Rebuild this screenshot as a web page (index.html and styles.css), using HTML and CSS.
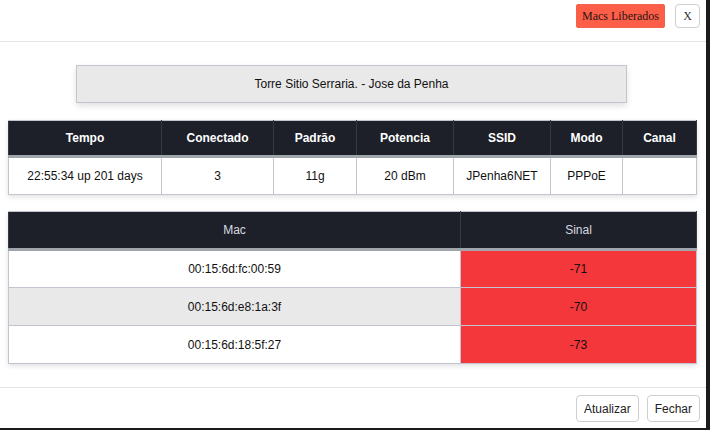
FILE: index.html
```html
<!DOCTYPE html>
<html lang="pt">
<head>
<meta charset="utf-8">
<title>Torre</title>
<link rel="stylesheet" href="styles.css">
</head>
<body>
<div class="modal">
  <div class="modal-header">
    <button class="btn-macs">Macs Liberados</button>
    <button class="btn-x">X</button>
  </div>
  <div class="modal-body">
    <div class="title-box">Torre Sitio Serraria. - Jose da Penha</div>
    <table class="info-table">
      <thead>
        <tr>
          <th class="c1">Tempo</th>
          <th class="c2">Conectado</th>
          <th class="c3">Padrão</th>
          <th class="c4">Potencia</th>
          <th class="c5">SSID</th>
          <th class="c6">Modo</th>
          <th class="c7">Canal</th>
        </tr>
      </thead>
      <tbody>
        <tr>
          <td>22:55:34 up 201 days</td>
          <td>3</td>
          <td>11g</td>
          <td>20 dBm</td>
          <td>JPenha6NET</td>
          <td>PPPoE</td>
          <td></td>
        </tr>
      </tbody>
    </table>
    <table class="mac-table">
      <thead>
        <tr>
          <th class="m1">Mac</th>
          <th class="m2">Sinal</th>
        </tr>
      </thead>
      <tbody>
        <tr>
          <td>00:15:6d:fc:00:59</td>
          <td class="sig">-71</td>
        </tr>
        <tr class="alt">
          <td>00:15:6d:e8:1a:3f</td>
          <td class="sig">-70</td>
        </tr>
        <tr>
          <td>00:15:6d:18:5f:27</td>
          <td class="sig">-73</td>
        </tr>
      </tbody>
    </table>
  </div>
  <div class="modal-footer">
    <button class="btn-foot">Atualizar</button>
    <button class="btn-foot">Fechar</button>
  </div>
</div>
</body>
</html>
```

FILE: styles.css
```css
* { box-sizing: border-box; }
html, body {
  margin: 0;
  padding: 0;
  background: #1b1b1d;
  width: 710px;
  height: 430px;
  overflow: hidden;
}
body {
  font-family: "Liberation Sans", Arial, sans-serif;
  font-size: 12px;
  color: #000;
}
.modal {
  width: 706px;
  height: 428px;
  background: #fff;
  display: flex;
  flex-direction: column;
}
.modal-header {
  height: 42px;
  border-bottom: 1px solid #e5e5e5;
  display: flex;
  justify-content: flex-end;
  align-items: flex-start;
  padding: 4px 6px 0 0;
  gap: 10px;
}
.btn-macs {
  width: 89px;
  height: 24px;
  background: #fd5e47;
  border: 1px solid #f3604c;
  border-radius: 2px;
  font-family: "Liberation Serif", "Times New Roman", serif;
  font-size: 12px;
  color: #2a1414;
  padding: 0;
}
.btn-x {
  width: 25px;
  height: 24px;
  background: #fff;
  border: 1px solid #cfcfcf;
  border-radius: 4px;
  font-family: "Liberation Serif", "Times New Roman", serif;
  font-size: 12px;
  color: #333;
  padding: 0;
}
.modal-body {
  flex: 1;
  padding: 23px 10px 0 8px;
}
.title-box {
  width: 551px;
  height: 38px;
  margin-left: 68px;
  background: #e9e9e9;
  border: 1px solid #c4c4cc;
  box-shadow: 0 3px 6px rgba(0, 0, 0, 0.12);
  display: flex;
  align-items: center;
  justify-content: center;
  font-size: 12px;
  color: #111;
}
table {
  border-collapse: collapse;
  width: 688px;
  table-layout: fixed;
  text-align: center;
  box-shadow: 0 2px 5px rgba(0, 0, 0, 0.12);
}
th {
  background: #1d2028;
  border-left: 1px solid #353944;
  border-right: 1px solid #353944;
  border-top: 1px solid #c4c4d0;
  border-bottom: 3px solid #a0a5ab;
  padding: 0;
  font-size: 12px;
}
td {
  border: 1px solid #c4c4d0;
  padding: 0;
  font-size: 12px;
  color: #111;
}
.info-table {
  margin-top: 17px;
}
.info-table th {
  height: 36px;
  color: #fff;
  font-weight: bold;
}
.info-table td {
  height: 38px;
}
.c1 { width: 153px; }
.c2 { width: 112px; }
.c3 { width: 83px; }
.c4 { width: 97px; }
.c5 { width: 97px; }
.c6 { width: 72px; }
.c7 { width: 74px; }
.mac-table {
  margin-top: 16px;
}
.mac-table th {
  height: 38px;
  color: #d6dae2;
  font-weight: normal;
}
.mac-table td {
  height: 38px;
}
.m1 { width: 452px; }
.m2 { width: 236px; }
.mac-table tr.alt td { background: #e9e9e9; }
.mac-table td.sig,
.mac-table tr.alt td.sig { background: #f4373a; color: #111; }
.modal-footer {
  height: 41px;
  border-top: 1px solid #e5e5e5;
  display: flex;
  justify-content: flex-end;
  align-items: flex-start;
  padding: 7px 6px 0 0;
  gap: 8px;
}
.btn-foot {
  height: 27px;
  background: #fff;
  border: 1px solid #cfcfcf;
  border-radius: 4px;
  font-family: "Liberation Sans", Arial, sans-serif;
  font-size: 12px;
  color: #222;
  padding: 0 7px;
}
```
